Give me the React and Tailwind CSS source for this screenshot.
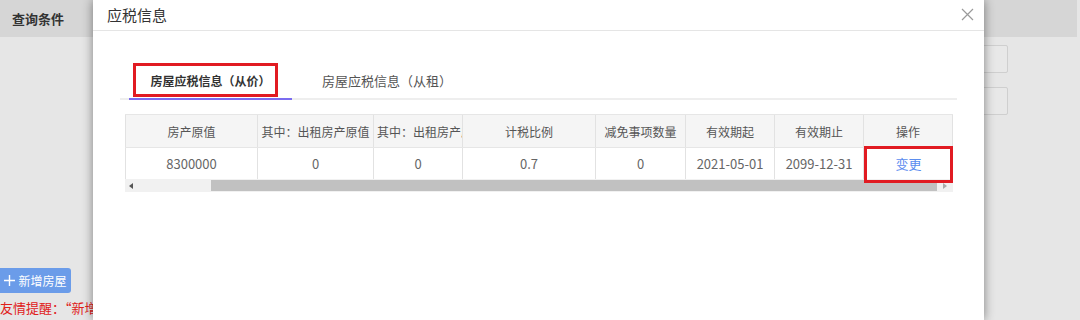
import React from "react";

const columns = [
  { title: "房产原值", w: "w-[133px]" },
  { title: "其中：出租房产原值", w: "w-[116px]" },
  { title: "其中：出租房产原值", w: "w-[89px]" },
  { title: "计税比例", w: "w-[133px]" },
  { title: "减免事项数量", w: "w-[90px]" },
  { title: "有效期起", w: "w-[89px]" },
  { title: "有效期止", w: "w-[89px]" },
  { title: "操作", w: "w-[89px]" },
];

const row = ["8300000", "0", "0", "0.7", "0", "2021-05-01", "2099-12-31"];

const BackgroundPage = () => (
  <div className="flex h-[320px] w-[1080px] flex-col bg-[#e6e6e6]">
    <div className="flex h-[37px] w-[1077px] items-center bg-[#d6d6d6] pl-[12px]">
      <span className="text-[13px] font-bold text-[#333]">查询条件</span>
    </div>
    <div className="flex flex-1 flex-col">
      <div className="flex flex-col items-end gap-[14px] pr-[72px] pt-[8px]">
        <div className="h-[28px] w-[120px] rounded-[2px] border border-[#cfcfcf] bg-[#e8e8e8]" />
        <div className="h-[28px] w-[120px] rounded-[2px] border border-[#cfcfcf] bg-[#e8e8e8]" />
      </div>
      <div className="mt-auto flex flex-col">
        <div className="flex h-[25px] w-[71px] items-center justify-center gap-[3px] rounded-r-[3px] bg-[#6b9ce9] text-[12px] text-white">
          <svg width="11" height="11" viewBox="0 0 11 11">
            <path d="M5.5 0V11M0 5.5H11" stroke="white" strokeWidth="1.4" />
          </svg>
          <span>新增房屋</span>
        </div>
        <div className="h-[27px] whitespace-nowrap pt-[5px] text-[13px] text-[#e0201a]">
          友情提醒：“新增房屋
        </div>
      </div>
    </div>
  </div>
);

const Modal = () => (
  <div className="absolute left-[93px] top-0 flex h-[320px] w-[891px] flex-col bg-white shadow-[0_0_10px_rgba(0,0,0,0.45)]">
    <div className="flex h-[31px] items-center justify-between border-b border-[#e5e5e5] pl-[14px] pr-[10px]">
      <span className="text-[15px] text-[#333]">应税信息</span>
      <svg width="13" height="13" viewBox="0 0 13 13" className="mb-[1px]">
        <path d="M1 1L12 12M12 1L1 12" stroke="#9a9a9a" strokeWidth="1.2" />
      </svg>
    </div>

    <div className="px-[27px] pt-[32px]">
      <div className="flex h-[37px] border-b-2 border-[#eeeeee]">
        <div className="relative ml-[9px] -mb-[2px] flex w-[163px] items-center justify-center border-b-2 border-[#7b6cf0]">
          <span className="text-[12px] font-bold text-[#333]">房屋应税信息（从价）</span>
          <div className="absolute left-[4px] top-0 h-[34px] w-[145px] border-[3px] border-[#e11b22]" />
        </div>
        <div className="flex items-center pl-[30px]">
          <span className="text-[13px] text-[#555]">房屋应税信息（从租）</span>
        </div>
      </div>
    </div>

    <div className="ml-[32px] mt-[14px] w-[828px]">
      <div className="flex h-[33px] border-t border-[#e6e6e6] bg-[#f5f5f5]">
        {columns.map((c, i) => (
          <div
            key={i}
            className={`${c.w} shrink-0 overflow-hidden whitespace-nowrap border-r border-[#e2e2e2] px-[3px] text-center text-[12px] leading-[33px] text-[#555] first:border-l`}
          >
            {c.title}
          </div>
        ))}
      </div>
      <div className="flex h-[32px] border-t border-[#e6e6e6]">
        {row.map((v, i) => (
          <div
            key={i}
            className={`${columns[i].w} flex shrink-0 items-center justify-center border-r border-[#e2e2e2] text-[13px] text-[#666] first:border-l`}
          >
            {v}
          </div>
        ))}
        <div className="relative flex w-[89px] shrink-0 items-center justify-center text-[13px] text-[#5b8def]">
          变更
          <div className="absolute -top-[2px] left-0 h-[37px] w-[89px] border-[3px] border-[#e11b22]" />
        </div>
      </div>
      <div className="flex h-[13px] items-center bg-[#f1f1f1]">
        <div className="flex w-[86px] items-center pl-[4px]">
          <svg width="4" height="6" viewBox="0 0 4 6">
            <path d="M4 0L0 3L4 6Z" fill="#555" />
          </svg>
        </div>
        <div className="h-[11px] w-[726px] bg-[#c1c1c1]" />
        <div className="flex flex-1 items-center justify-end pr-[6px]">
          <svg width="4" height="6" viewBox="0 0 4 6">
            <path d="M0 0L4 3L0 6Z" fill="#aaa" />
          </svg>
        </div>
      </div>
    </div>
  </div>
);

export default function App() {
  return (
    <div className="relative h-[320px] w-[1080px] overflow-hidden font-['Noto_Sans_CJK_SC','Noto_Sans',sans-serif]">
      <BackgroundPage />
      <Modal />
    </div>
  );
}
